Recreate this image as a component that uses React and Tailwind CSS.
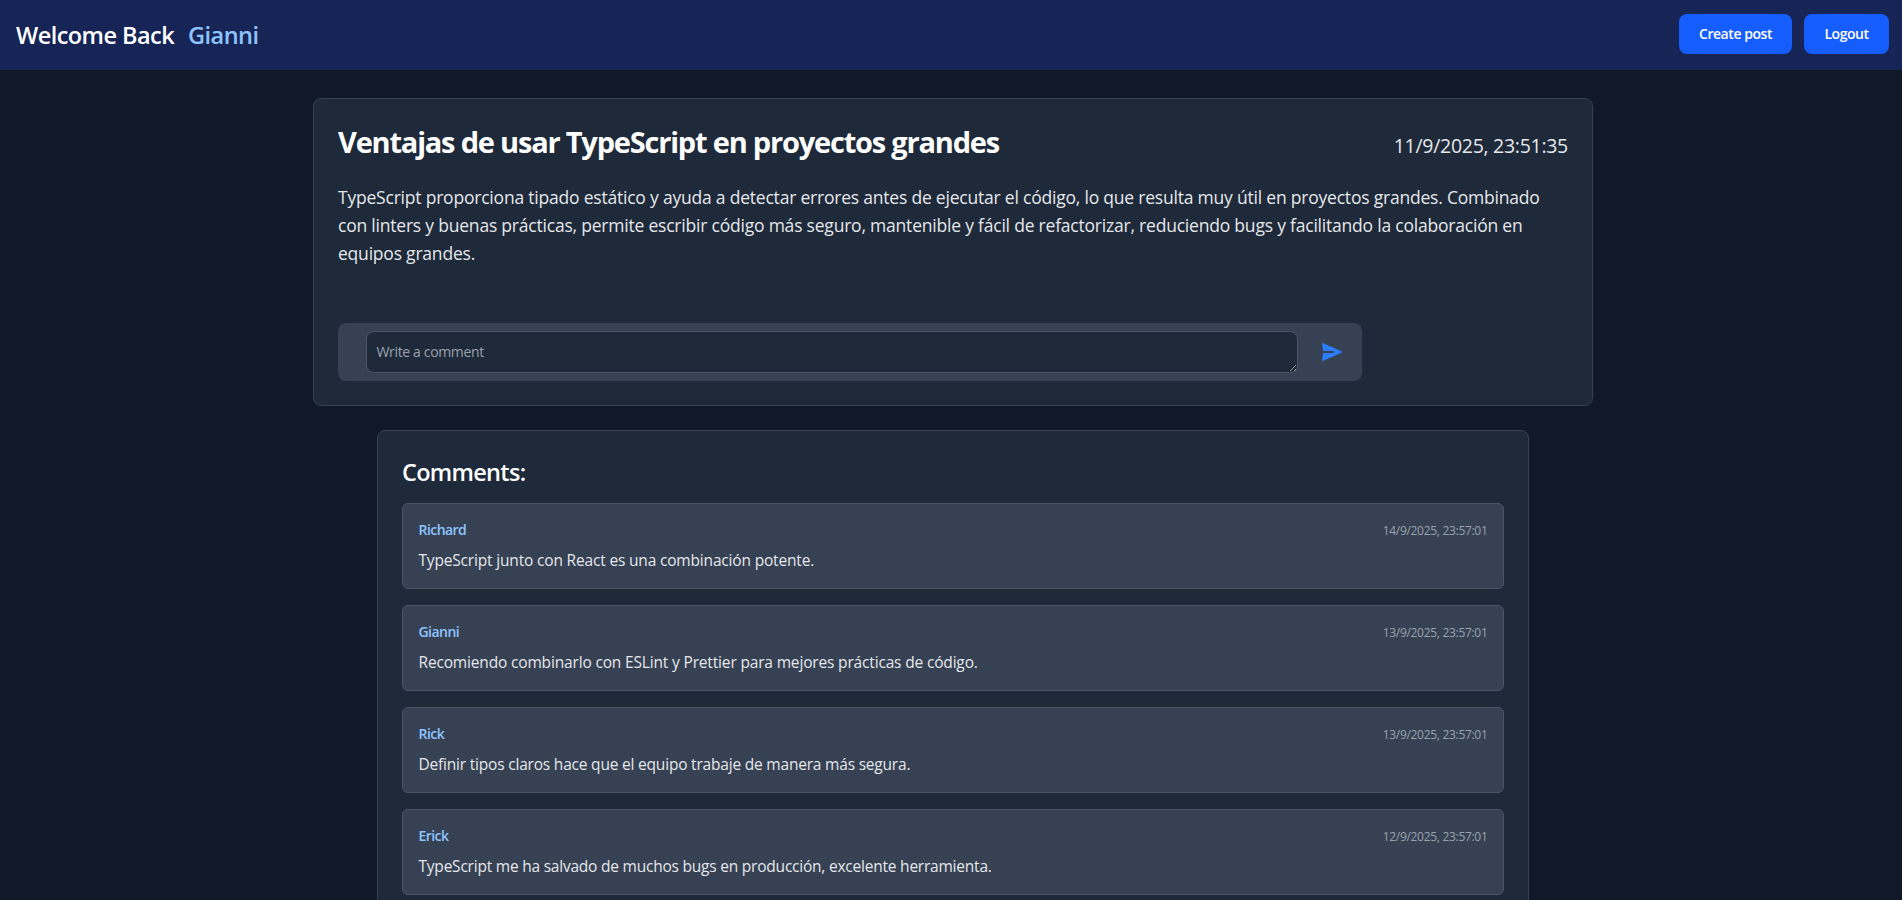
const comments = [
  { name: "Richard", date: "14/9/2025, 23:57:01", text: "TypeScript junto con React es una combinación potente.", track: "tracking-[-0.175px]" },
  { name: "Gianni", date: "13/9/2025, 23:57:01", text: "Recomiendo combinarlo con ESLint y Prettier para mejores prácticas de código.", track: "tracking-[-0.165px]" },
  { name: "Rick", date: "13/9/2025, 23:57:01", text: "Definir tipos claros hace que el equipo trabaje de manera más segura.", track: "tracking-[-0.2px]" },
  { name: "Erick", date: "12/9/2025, 23:57:01", text: "TypeScript me ha salvado de muchos bugs en producción, excelente herramienta.", track: "tracking-[-0.22px]" },
];

function SendIcon() {
  return (
    <svg className="h-[18px] w-5" viewBox="0 0 20 18" fill="currentColor" aria-hidden="true">
      <path d="M0.7 0.1 19.9 8.6Q20.5 9 19.9 9.4L0.7 17.9Q0 18.1 0 17.3L1.2 10H12V8H1.2L0 0.7Q0 -0.1 0.7 0.1Z" />
    </svg>
  );
}

function Comment({ name, date, text, track }) {
  return (
    <li className="rounded-md border border-gray-600 bg-gray-700 px-[15.5px] py-4">
      <div className="mb-2 flex h-5 items-center justify-between">
        <span className="text-sm font-semibold text-blue-300 tracking-[-0.55px]">{name}</span>
        <span className="pt-0.5 text-xs text-gray-400 tracking-[-0.3px]">{date}</span>
      </div>
      <p className={"h-6 whitespace-nowrap text-[15.5px] leading-6 text-gray-200 " + track}>{text}</p>
    </li>
  );
}

export default function App() {
  return (
    <div className="h-[900px] overflow-hidden bg-[#111827] font-['Open_Sans','Noto_Sans',sans-serif] text-white">
      <header className="flex h-[70px] items-center justify-between bg-blue-950 pl-4 pr-[13px]">
        <h1 className="flex gap-[14px] text-[23.5px] leading-8 font-semibold tracking-[-0.55px]">
          <span>Welcome Back</span>
          <span className="text-blue-300">Gianni</span>
        </h1>
        <div className="flex gap-3 pb-0.5 text-sm font-semibold tracking-[-0.45px]">
          <button className="h-10 w-[113px] rounded-lg bg-blue-600">Create post</button>
          <button className="h-10 w-[85px] rounded-lg bg-blue-600">Logout</button>
        </div>
      </header>
      <main className="flex flex-col items-center gap-6 pl-1 pt-7">
        <article className="h-[308px] w-[1280px] rounded-lg border border-gray-700 bg-gray-800 p-6">
          <div className="mb-6 flex h-9 items-center justify-between">
            <h2 className="pt-px text-[29px] leading-9 font-bold tracking-[-1.2px]">Ventajas de usar TypeScript en proyectos grandes</h2>
            <span className="pt-2.5 text-[19.5px] leading-7 tracking-[-0.28px] text-gray-200">11/9/2025, 23:51:35</span>
          </div>
          <p className="text-[17.5px] leading-7 whitespace-nowrap tracking-[-0.21px] text-gray-200">
            TypeScript proporciona tipado estático y ayuda a detectar errores antes de ejecutar el código, lo que resulta muy útil en proyectos grandes. Combinado<br />
            con linters y buenas prácticas, permite escribir código más seguro, mantenible y fácil de refactorizar, reduciendo bugs y facilitando la colaboración en<br />
            equipos grandes.
          </p>
          <form className="mt-14 flex h-[58px] w-[1024px] items-center rounded-lg bg-gray-700 pl-7">
            <textarea rows="1" placeholder="Write a comment" className="block h-[42px] w-[932px] rounded-lg border border-gray-600 bg-gray-800 px-[9.5px] py-2.5 text-sm tracking-[-0.35px] placeholder:text-gray-400" />
            <button type="button" aria-label="Send" className="ml-6 text-blue-500"><SendIcon /></button>
          </form>
        </article>
        <section className="w-[1152px] rounded-lg border border-gray-700 bg-gray-800 p-6">
          <h3 className="mb-4 h-8 pt-px text-[23.5px] leading-8 font-semibold tracking-[-0.7px]">Comments:</h3>
          <ul className="flex flex-col gap-4">
            {comments.map((c) => <Comment key={c.name} {...c} />)}
          </ul>
        </section>
      </main>
    </div>
  );
}
